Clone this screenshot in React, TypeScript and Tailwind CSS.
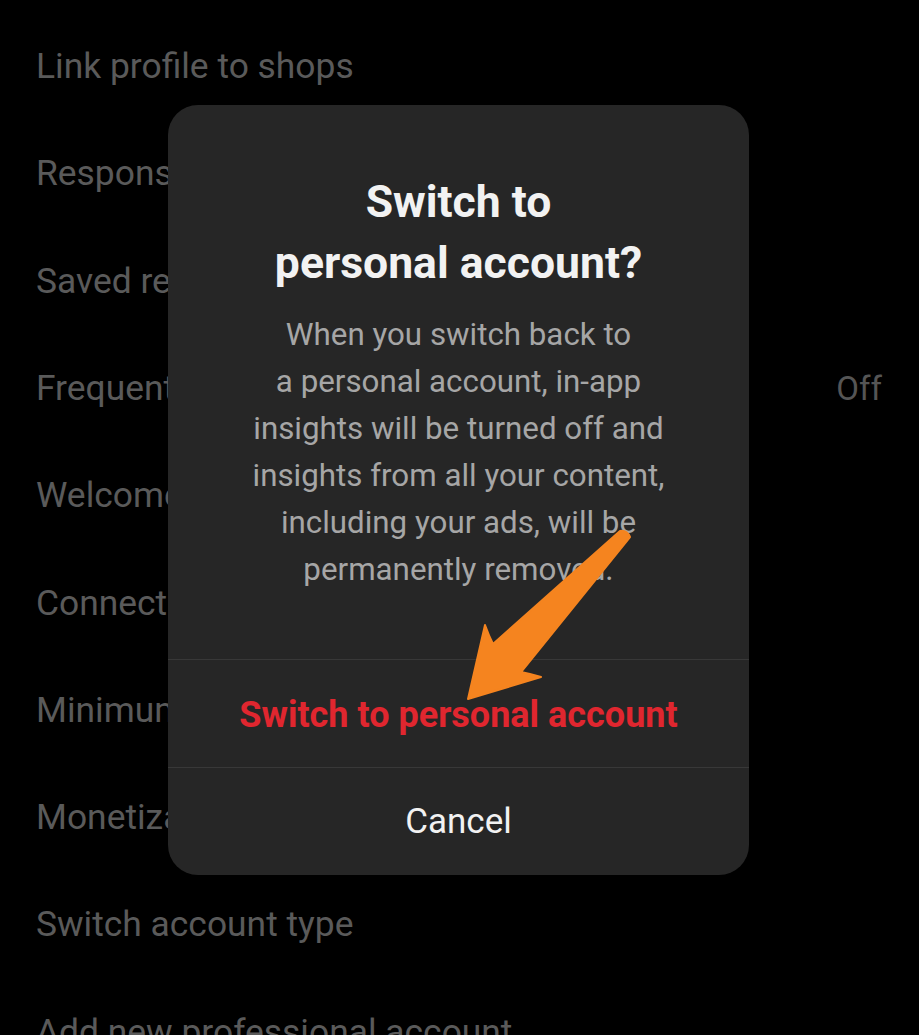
const rows = [
  { label: "Link profile to shops" },
  { label: "Response time" },
  { label: "Saved replies" },
  { label: "Frequently asked questions", value: "Off" },
  { label: "Welcome message" },
  { label: "Connected accounts" },
  { label: "Minimum age" },
  { label: "Monetization status" },
  { label: "Switch account type" },
  { label: "Add new professional account" },
];

function SettingsList() {
  return (
    <div className="flex flex-col pt-[13px]">
      {rows.map((row) => (
        <div
          key={row.label}
          className="flex h-[107.3px] shrink-0 items-center justify-between pl-[36px] pr-[37px] text-[35.4px] text-[#5a5a5a]"
        >
          <span className="whitespace-nowrap">{row.label}</span>
          {row.value && <span className="text-[33px] text-[#555555]">{row.value}</span>}
        </div>
      ))}
    </div>
  );
}

function SwitchDialog() {
  return (
    <div className="absolute left-[168px] top-[105px] flex w-[581px] flex-col overflow-hidden rounded-[30px] bg-[#262626]">
      <div className="flex flex-col items-center pt-[67px] pb-[66px] text-center">
        <h2 className="text-[44.5px] font-bold leading-[61px] text-[#f2f2f2]">
          Switch to
          <br />
          personal account?
        </h2>
        <p className="mt-[17px] text-[31.3px] leading-[47px] text-[#a6a6a6]">
          When you switch back to
          <br />
          a personal account, in-app
          <br />
          insights will be turned off and
          <br />
          insights from all your content,
          <br />
          including your ads, will be
          <br />
          permanently removed.
        </p>
      </div>
      <button className="flex h-[108px] items-center justify-center border-t border-[#383838] pt-[2px] text-[36px] font-bold text-[#e0262f]">
        Switch to personal account
      </button>
      <button className="flex h-[108px] items-center justify-center border-t border-[#383838] pt-[2px] text-[35px] text-[#f2f2f2]">
        Cancel
      </button>
    </div>
  );
}

function Arrow() {
  return (
    <svg
      className="pointer-events-none absolute left-0 top-0"
      width="919"
      height="1035"
      viewBox="0 0 919 1035"
    >
      <path
        d="M468 699 L485 625 Q489 636 493 644 L620 531 Q627 530 630 537 L521 672 Q531 674 541 677 Z"
        fill="#f5841f"
        stroke="#f5841f"
        strokeWidth="2"
        strokeLinejoin="round"
      />
    </svg>
  );
}

export default function App() {
  return (
    <div
      className="relative h-[1035px] w-[919px] overflow-hidden bg-black"
      style={{ fontFamily: "Roboto, 'Liberation Sans', sans-serif" }}
    >
      <SettingsList />
      <SwitchDialog />
      <Arrow />
    </div>
  );
}
